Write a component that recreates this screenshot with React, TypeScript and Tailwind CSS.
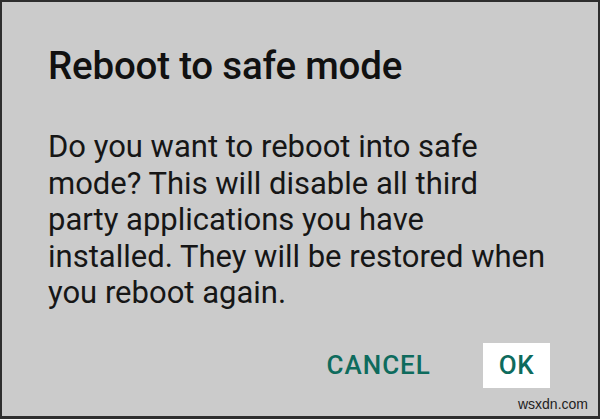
import React from "react";

export default function App() {
  return (
    <div
      className="relative w-[600px] h-[419px] overflow-hidden bg-[#cbcbcb] border-t-2 border-l-2 border-r-2 border-b-[3px] border-[#2e2e2e] text-[#111]"
      style={{ fontFamily: "Roboto, 'Noto Sans', sans-serif" }}
    >
      <div className="flex flex-col pl-[46px] pt-[42px]">
        <h1 className="text-[38.5px] leading-[44px] font-medium tracking-[-0.2px]">
          Reboot to safe mode
        </h1>

        <p className="mt-[41px] w-[506px] text-[31px] leading-[36.5px] font-normal text-[#161616]">
          Do you want to reboot into safe mode? This will disable all third
          party applications you have installed. They will be restored when
          you reboot again.
        </p>

        <div className="mt-[31px] flex items-center justify-end gap-[36px] pr-[48px]">
          <button className="h-[45px] px-[16px] text-[26px] font-medium text-[#0e6b5d] tracking-[1px]">
            CANCEL
          </button>
          <button className="h-[45px] px-[16px] bg-white text-[26px] font-medium text-[#0e6b5d] tracking-[0.4px]">
            OK
          </button>
        </div>
      </div>

      <span
        className="absolute right-[10px] bottom-[1px] text-[14px] text-[#222]"
        style={{ fontFamily: "'Liberation Sans', Arial, sans-serif" }}
      >
        wsxdn.com
      </span>
    </div>
  );
}
